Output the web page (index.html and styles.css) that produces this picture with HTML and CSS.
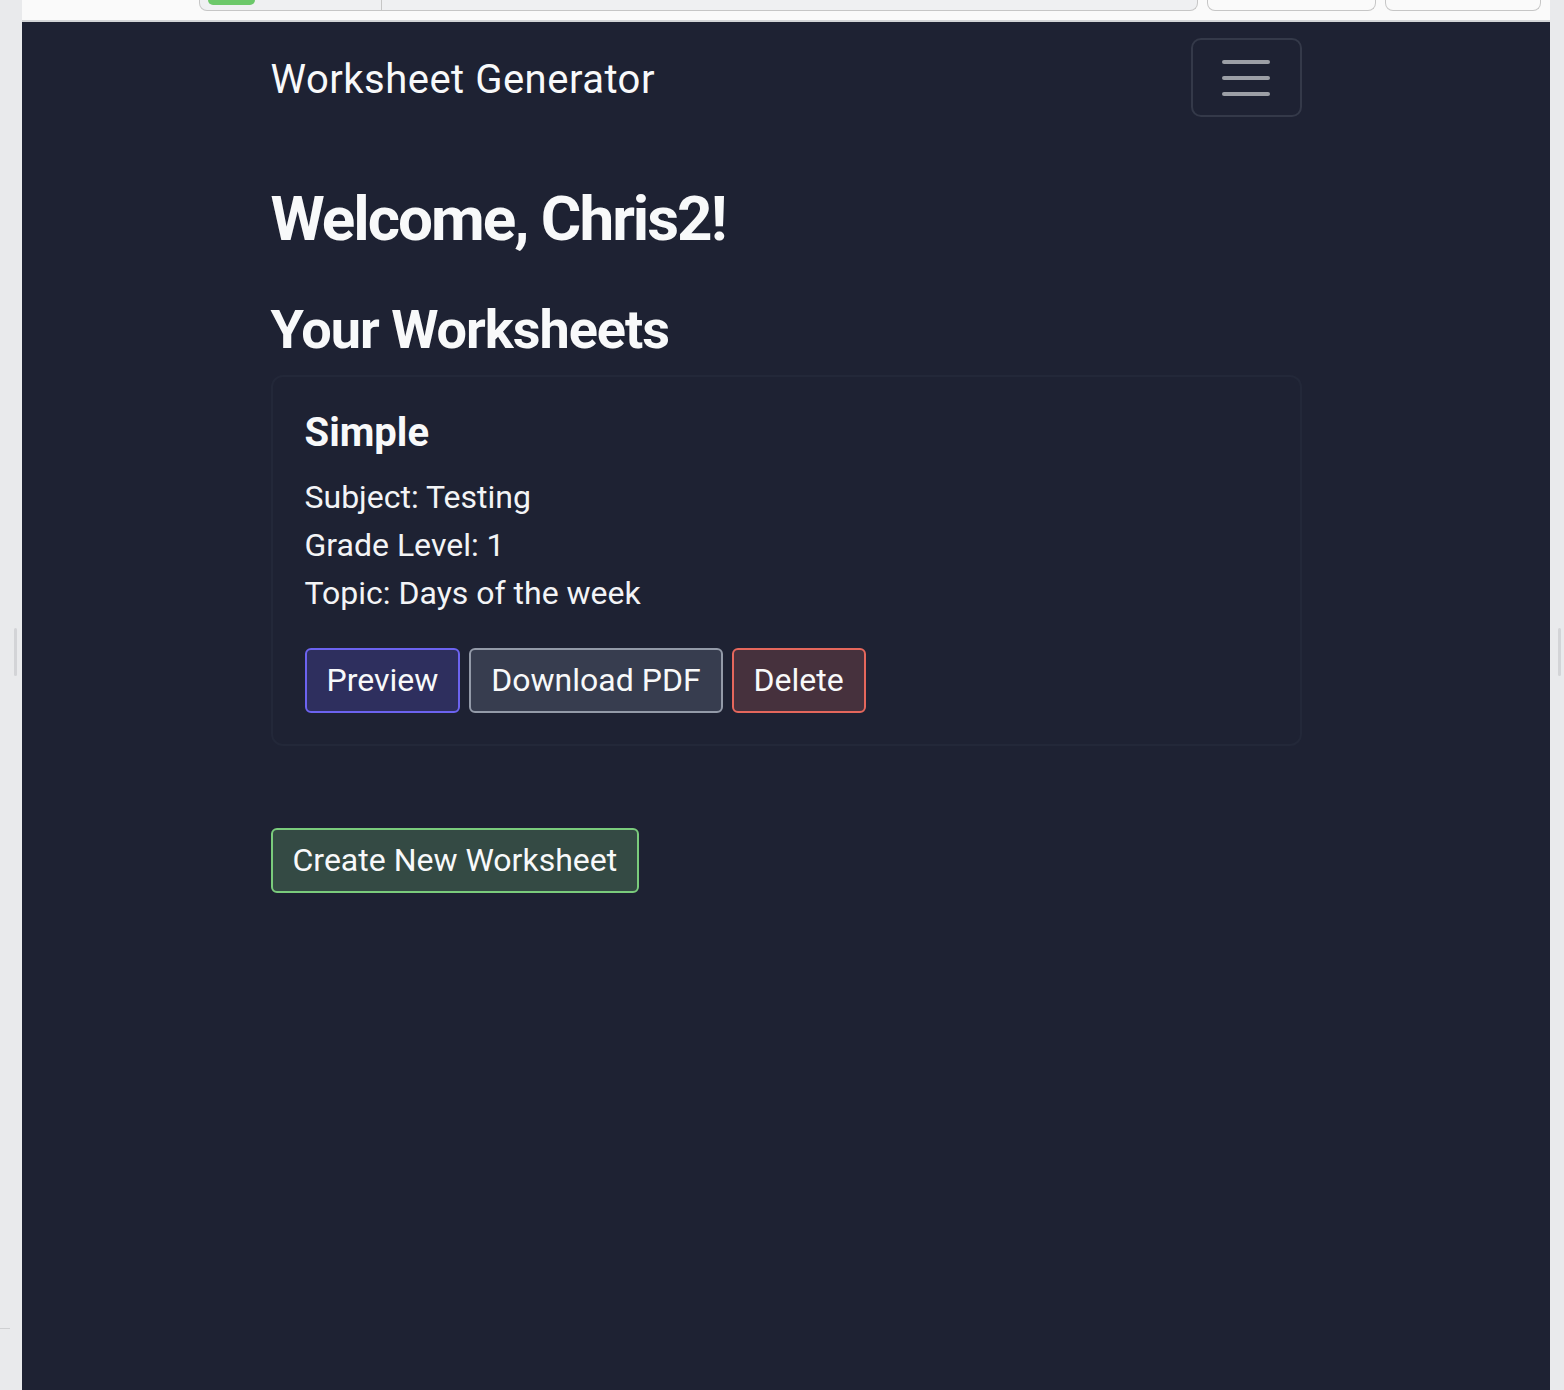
FILE: index.html
```html
<!DOCTYPE html>
<html lang="en">
<head>
<meta charset="utf-8">
<title>Worksheet Generator</title>
<link rel="stylesheet" href="styles.css">
</head>
<body>
<div class="frame">
  <div class="side side-left">
    <div class="scroll-hint"></div>
    <div class="corner-line"></div>
  </div>
  <div class="center">
    <div class="chrome">
      <div class="urlbox">
        <div class="pill"></div>
        <div class="divider"></div>
      </div>
      <div class="chrome-btn chrome-btn-a"></div>
      <div class="chrome-btn chrome-btn-b"></div>
    </div>
    <div class="page">
      <nav class="navbar">
        <div class="container nav-inner">
          <a class="brand">Worksheet Generator</a>
          <button class="toggler" aria-label="Menu">
            <span class="bar"></span>
            <span class="bar"></span>
            <span class="bar"></span>
          </button>
        </div>
      </nav>
      <main class="container">
        <h1 class="welcome">Welcome, Chris2!</h1>
        <h2 class="section-title">Your Worksheets</h2>
        <div class="card">
          <h5 class="card-title">Simple</h5>
          <div class="card-line">Subject: Testing</div>
          <div class="card-line">Grade Level: 1</div>
          <div class="card-line">Topic: Days of the week</div>
          <div class="actions">
            <button class="btn btn-preview">Preview</button>
            <button class="btn btn-download">Download PDF</button>
            <button class="btn btn-delete">Delete</button>
          </div>
        </div>
        <div class="create-row">
          <button class="btn btn-create">Create New Worksheet</button>
        </div>
      </main>
    </div>
  </div>
  <div class="side side-right">
    <div class="scroll-hint scroll-hint-right"></div>
  </div>
</div>
</body>
</html>
```

FILE: styles.css
```css
* { box-sizing: border-box; }

html, body {
  margin: 0;
  padding: 0;
  height: 100%;
}

body {
  font-family: Roboto, "Noto Sans", "Liberation Sans", sans-serif;
  background: #e9eaec;
  overflow: hidden;
}

.frame {
  display: flex;
  height: 1390px;
}

.side {
  background: #e9eaec;
  display: flex;
  flex-direction: column;
}

.side-left {
  width: 22px;
  align-items: flex-start;
}

.side-right {
  width: 14px;
  align-items: flex-end;
}

.scroll-hint {
  width: 3px;
  height: 48px;
  background: #d3d4d7;
  border-radius: 2px;
  margin-top: 628px;
  margin-left: 14px;
}

.scroll-hint-right {
  margin-left: 0;
  margin-right: 3px;
}

.corner-line {
  width: 10px;
  height: 1px;
  background: #cfd0d2;
  margin-top: 652px;
}

.center {
  flex: 1;
  display: flex;
  flex-direction: column;
}

.chrome {
  height: 22px;
  background: #fafafa;
  border-bottom: 2px solid #d3d5d7;
  display: flex;
  align-items: flex-start;
}

.urlbox {
  margin-left: 177px;
  width: 999px;
  height: 11px;
  background: #eff0f2;
  border: 1.5px solid #c6c6c6;
  border-top: none;
  border-radius: 0 0 8px 8px;
  display: flex;
  align-items: flex-start;
}

.pill {
  margin-left: 8px;
  width: 47px;
  height: 5px;
  background: #6cc86a;
  border-radius: 0 0 6px 6px;
}

.divider {
  margin-left: 126px;
  width: 1px;
  height: 10px;
  background: #c6c6c6;
}

.chrome-btn {
  height: 11px;
  background: #fafafa;
  border: 1.5px solid #c6c6c6;
  border-top: none;
  border-radius: 0 0 8px 8px;
}

.chrome-btn-a {
  margin-left: 9px;
  width: 169px;
}

.chrome-btn-b {
  margin-left: 9px;
  width: 156px;
}

.page {
  flex: 1;
  background: #1e2233;
  color: #f3f4f6;
}

.container {
  width: 1031px;
  margin: 0 auto;
}

.navbar {
  padding: 16px 0;
}

.nav-inner {
  display: flex;
  align-items: center;
  justify-content: space-between;
}

.brand {
  font-size: 40px;
  line-height: 60px;
  letter-spacing: 0.5px;
  color: #f8f9fa;
  padding-top: 4px;
}

.toggler {
  width: 111px;
  height: 79px;
  background: transparent;
  border: 2px solid #343949;
  border-radius: 10px;
  display: flex;
  flex-direction: column;
  align-items: center;
  justify-content: center;
  gap: 12px;
  padding: 0;
}

.bar {
  display: block;
  width: 48px;
  height: 4px;
  border-radius: 2px;
  background: #9c9fa6;
}

.welcome {
  margin: 46px 0 37px;
  font-size: 62px;
  line-height: 80px;
  letter-spacing: -2px;
  font-weight: 700;
  color: #f8f9fa;
}

.section-title {
  margin: 0 0 12px;
  font-size: 54px;
  line-height: 67px;
  letter-spacing: -1px;
  font-weight: 700;
  color: #f8f9fa;
}

.card {
  border: 2px solid #232839;
  border-radius: 12px;
  padding: 32px 32px 31px;
}

.card-title {
  margin: 0 0 16px;
  font-size: 40px;
  line-height: 48px;
  font-weight: 700;
  color: #f8f9fa;
}

.card-line {
  font-size: 32px;
  line-height: 48px;
  color: #f3f4f6;
}

.actions {
  display: flex;
  gap: 9px;
  margin-top: 31px;
}

.btn {
  font-family: inherit;
  font-size: 32px;
  line-height: 61px;
  height: 65px;
  padding: 0 20px;
  border: 2px solid;
  border-radius: 6px;
  color: #f8f9fa;
  cursor: pointer;
}

.btn-preview {
  background: #2e2f5e;
  border-color: #6c63f0;
}

.btn-download {
  background: #373d4f;
  border-color: #939aa8;
}

.btn-delete {
  background: #46313d;
  border-color: #e5675c;
}

.create-row {
  margin-top: 82px;
  display: flex;
}

.btn-create {
  background: #344a44;
  border-color: #7acb7c;
}
```
